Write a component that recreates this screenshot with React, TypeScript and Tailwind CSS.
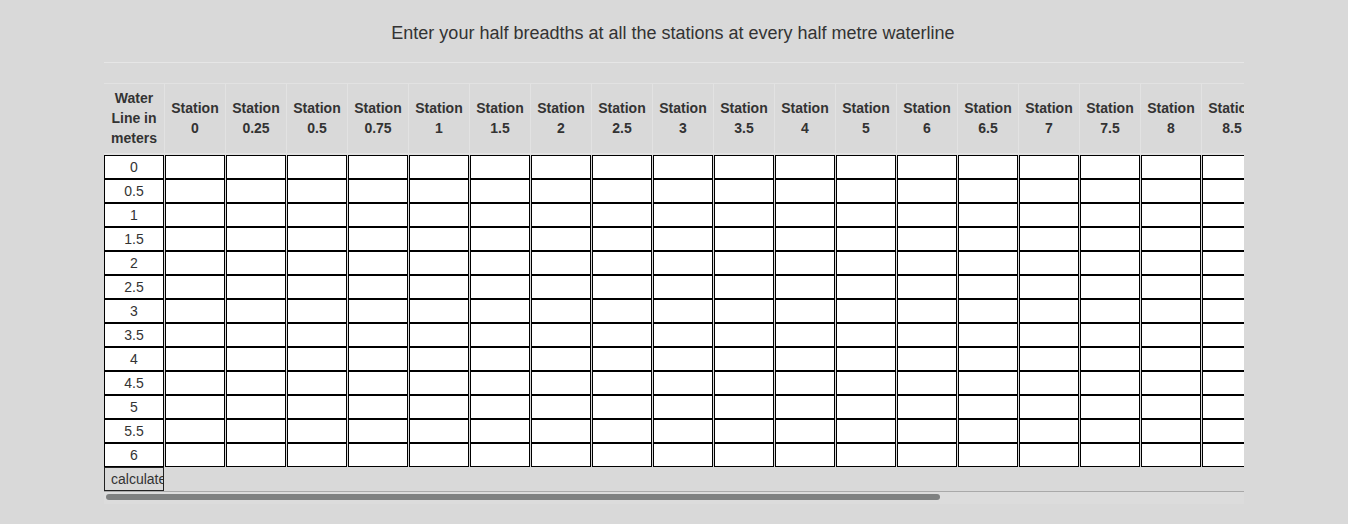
import React from "react";

const stations = [
  "0", "0.25", "0.5", "0.75", "1", "1.5", "2", "2.5", "3", "3.5", "4", "5", "6",
  "6.5", "7", "7.5", "8", "8.5", "9", "9.25", "9.5", "9.75", "10", "10.5",
];
const waterlines = ["0", "0.5", "1", "1.5", "2", "2.5", "3", "3.5", "4", "4.5", "5", "5.5", "6"];

export default function App() {
  return (
    <div
      className="min-h-[524px] w-full bg-[#d9d9d9] text-[#333333]"
      style={{ fontFamily: '"Liberation Sans", Arial, sans-serif' }}
    >
      <div className="mx-auto w-[1140px]">
        <div className="pt-[20px] h-[46px] text-center text-[18px] leading-[26px] pr-[2px]">
          Enter your half breadths at all the stations at every half metre waterline
        </div>
        <div className="mt-[16px] h-px bg-[#e6e6e6]" />
        <div className="mt-[20px] overflow-hidden">
          <div className="w-max">
            <div className="flex border-t border-b-2 border-[#e2e2e2]">
              <div className="w-[61px] h-[69px] pb-[2px] shrink-0 border-r border-[#e2e2e2] flex items-center justify-center text-center text-[14px] font-bold leading-[20px] px-[4px]">
                Water Line in meters
              </div>
              {stations.map((s) => (
                <div
                  key={s}
                  className="w-[61px] h-[69px] pb-[2px] shrink-0 border-r border-[#e2e2e2] flex flex-col items-center justify-center text-center text-[14px] font-bold leading-[20px]"
                >
                  <span>Station</span>
                  <span>{s}</span>
                </div>
              ))}
            </div>
            {waterlines.map((w) => (
              <div key={w} className="flex">
                <div className="w-[61px] shrink-0 pr-px">
                  <div className="w-[60px] h-[24px] border border-black bg-white text-center text-[14px] leading-[22px]">
                    {w}
                  </div>
                </div>
                {stations.map((s) => (
                  <div key={s} className="w-[61px] shrink-0 pr-px">
                    <div className="w-[60px] h-[24px] border border-black bg-white" />
                  </div>
                ))}
              </div>
            ))}
            <div className="w-[60px] h-[24px] border border-[#222] bg-[#dadada] overflow-hidden whitespace-nowrap pl-[6px] text-left text-[14px] leading-[22px] text-[#333]">
              calculate
            </div>
          </div>
        </div>
        <div className="h-px bg-[#a9a9a9]" />
        <div className="h-[12px] bg-[#dcdcdc] pt-[2px] pl-[2px]">
          <div className="w-[834px] h-[6px] rounded-full bg-[#7f8181]" />
        </div>
      </div>
    </div>
  );
}
